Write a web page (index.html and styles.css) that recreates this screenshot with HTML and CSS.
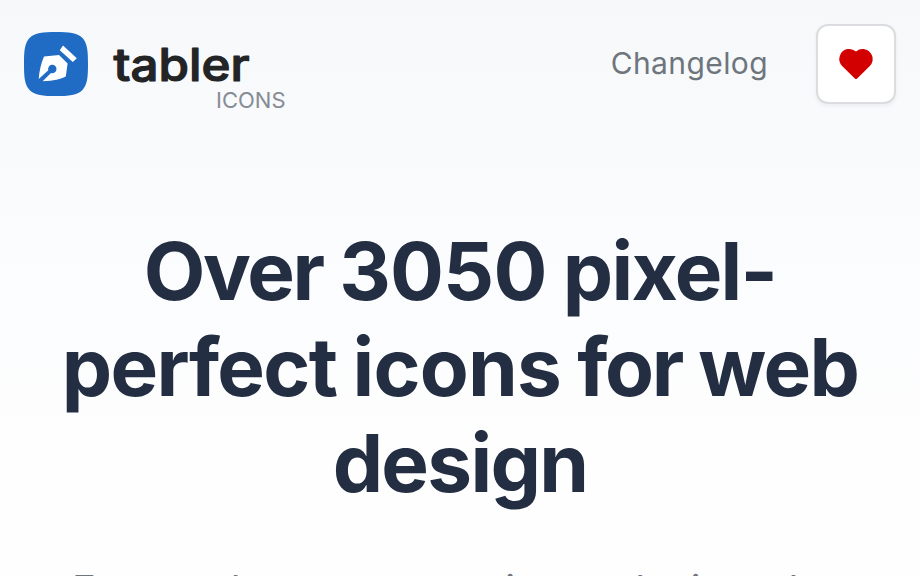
FILE: index.html
```html
<!DOCTYPE html>
<html lang="en">
<head>
<meta charset="utf-8">
<title>Tabler Icons</title>
<link rel="stylesheet" href="styles.css">
</head>
<body>
<header class="header">
  <a class="brand">
    <svg class="mark" viewBox="0 0 64 64" aria-hidden="true">
      <path fill="#206bc4" d="M32 0C45 0 53 .6 58.2 5.8S64 19 64 32 63.4 53 58.2 58.2 45 64 32 64 11 63.4 5.8 58.2 0 45 0 32 .6 11 5.8 5.8 19 0 32 0Z"/>
      <path fill="#fff" d="M39 13.6 52.8 26.2 48.8 30 35.8 18.2Z"/>
      <path fill="#fff" d="M20 24.5 35 23 43.6 31.6 41.8 44.4Q35 48.4 18.6 49.2L27 41A4.2 4.2 0 1 0 24.3 38.3L14.7 47Q15.5 35 20 24.5Z"/>
    </svg>
    <svg class="wordmark" viewBox="0 0 180 64">
      <text class="word" x="1.5" y="49" textLength="136" lengthAdjust="spacingAndGlyphs">tabler</text>
      <text class="sub" x="104" y="76">ICONS</text>
    </svg>
  </a>
  <nav class="nav">
    <a class="link">Changelog</a>
    <a class="sponsor" aria-label="Sponsor">
      <svg class="heart" viewBox="0 0 24 24" aria-hidden="true"><path d="M6.979 3.074a6 6 0 0 1 4.988 1.425l.037 .033l.034 -.03a6 6 0 0 1 4.733 -1.44l.246 .036a6 6 0 0 1 3.364 10.008l-.18 .185l-.048 .041l-7.45 7.379a1 1 0 0 1 -1.313 .082l-.094 -.082l-7.493 -7.422a6 6 0 0 1 3.176 -10.215z"/></svg>
    </a>
  </nav>
</header>
<main class="hero">
  <h1 class="title"><span class="tight">Over</span> <span class="wide">3050</span> pixel-perfect <span class="wide">icons</span> <span class="tight">for</span> web design</h1>
  <p class="lead">Free and open source icons designed to</p>
</main>
</body>
</html>
```
FILE: styles.css
```css
* { box-sizing: border-box; }
html { overflow: hidden; }
body {
  margin: 0;
  height: 576px;
  overflow: hidden;
  font-family: Inter, "Liberation Sans", sans-serif;
  font-optical-sizing: none;
  background: linear-gradient(#f6f8fa, #fbfcfe 45%, #fefefe 80%);
}
.header {
  display: flex;
  align-items: center;
  justify-content: space-between;
  height: 128px;
  padding: 0 24px;
}
.brand { display: flex; gap: 24px; }
.mark { width: 64px; height: 64px; }
.wordmark { width: 180px; height: 64px; overflow: visible; }
.word {
  font-size: 45px;
  font-weight: 500;
  fill: #232426;
  stroke: #232426;
  stroke-width: 1.2;
  stroke-linejoin: round;
}
.sub { font-size: 22px; fill: #868c94; }
.nav { display: flex; align-items: center; gap: 48px; }
.link {
  font-size: 30px;
  line-height: 40px;
  letter-spacing: .4px;
  padding-bottom: 2px;
  color: #6e757d;
}
.sponsor {
  display: flex;
  align-items: center;
  justify-content: center;
  width: 80px;
  height: 80px;
  border: 2px solid #dadcdf;
  border-radius: 12px;
  background: #fff;
  box-shadow: 0 2px 4px rgba(30, 41, 59, .06);
}
.heart { width: 40px; height: 40px; fill: #d20000; }
.hero { padding: 95px 48px 0; text-align: center; }
.title {
  margin: 0;
  font-size: 80px;
  line-height: 96px;
  font-weight: 700;
  letter-spacing: -1.7px;
  word-spacing: -1px;
  color: #232e42;
}
.tight { letter-spacing: -2.3px; }
.wide { letter-spacing: -.8px; }
.lead {
  margin: 49px 0 0;
  font-size: 40px;
  line-height: 60px;
  letter-spacing: .45px;
  color: #6e757d;
}
```
